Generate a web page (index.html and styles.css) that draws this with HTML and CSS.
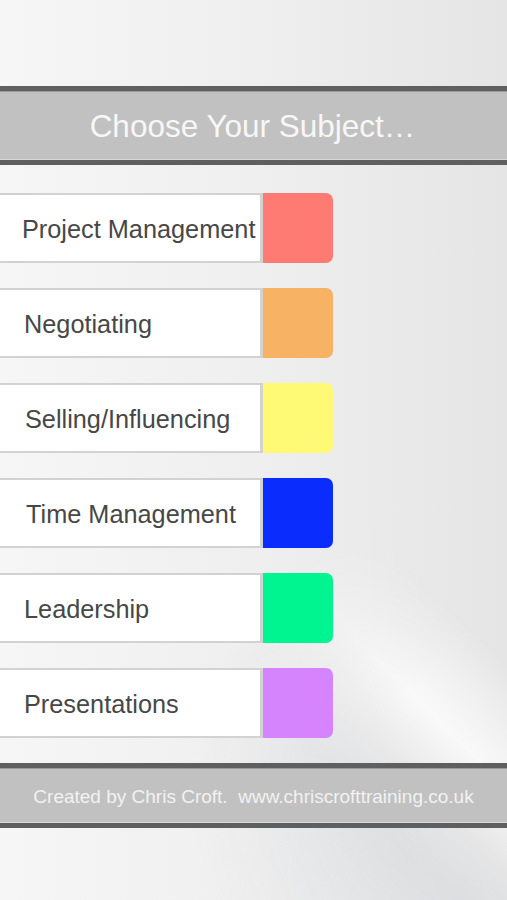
FILE: index.html
```html
<!DOCTYPE html>
<html lang="en">
<head>
<meta charset="utf-8">
<title>Choose Your Subject</title>
<link rel="stylesheet" href="styles.css">
</head>
<body>
<div class="page">
  <header class="bar title-bar">
    <h1 class="title">Choose Your Subject…</h1>
  </header>
  <ul class="subjects">
    <li class="subject">
      <span class="label pad-22">Project Management</span>
      <span class="swatch red"></span>
    </li>
    <li class="subject">
      <span class="label pad-24">Negotiating</span>
      <span class="swatch orange"></span>
    </li>
    <li class="subject">
      <span class="label pad-25">Selling/Influencing</span>
      <span class="swatch yellow"></span>
    </li>
    <li class="subject">
      <span class="label pad-26">Time Management</span>
      <span class="swatch blue"></span>
    </li>
    <li class="subject">
      <span class="label pad-24">Leadership</span>
      <span class="swatch green"></span>
    </li>
    <li class="subject">
      <span class="label pad-24">Presentations</span>
      <span class="swatch purple"></span>
    </li>
  </ul>
  <footer class="bar footer-bar">
    <p class="credit">Created by Chris Croft.  www.chriscrofttraining.co.uk</p>
  </footer>
</div>
</body>
</html>
```

FILE: styles.css
```css
html, body {
  margin: 0;
  padding: 0;
}

body {
  position: relative;
  width: 507px;
  height: 900px;
  overflow: hidden;
  font-family: "Liberation Sans", Arial, sans-serif;
  background: linear-gradient(to right, #f6f6f6 0%, #efefef 50%, #e5e5e5 100%);
}

body::before {
  content: "";
  position: absolute;
  inset: 0;
  background: linear-gradient(45deg,
    rgba(205,210,216,0) 0%,
    rgba(205,210,216,0.4) 33%,
    rgba(228,230,232,0.2) 38%,
    rgba(255,255,255,0.75) 44%,
    rgba(255,255,255,0) 53%);
  -webkit-mask-image: radial-gradient(circle at 490px 790px, #000 0, #000 120px, transparent 300px);
  mask-image: radial-gradient(circle at 490px 790px, #000 0, #000 120px, transparent 300px);
  pointer-events: none;
}

.page {
  position: relative;
  display: flex;
  flex-direction: column;
  padding-top: 86px;
}

.bar {
  background: #c1c1c1;
  border-top: 5px solid #5f5f5f;
  border-bottom: 5px solid #5f5f5f;
  box-shadow: inset 0 -1px 0 #d9d9d9, inset 0 1px 0 #9a9a9a;
  display: flex;
  align-items: center;
  justify-content: center;
}

.title-bar {
  height: 69px;
}

.title {
  margin: 0;
  padding-top: 2px;
  font-weight: normal;
  font-size: 31.5px;
  color: #f7f7f7;
  transform: translateX(-1px);
}

.subjects {
  list-style: none;
  margin: 28px 0 0 0;
  padding: 0;
  display: flex;
  flex-direction: column;
  gap: 25px;
}

.subject {
  display: flex;
  height: 70px;
}

.label {
  box-sizing: border-box;
  width: 267px;
  margin-left: -4px;
  height: 70px;
  padding-top: 3px;
  background: #ffffff;
  border: 2px solid #d2d2d2;
  border-right-width: 3px;
  display: flex;
  align-items: center;
  font-size: 25.3px;
  color: #474747;
  white-space: nowrap;
}

.pad-22 { padding-left: 24px; }
.pad-24 { padding-left: 26px; }
.pad-25 { padding-left: 27px; }
.pad-26 { padding-left: 28px; }

.swatch {
  width: 70px;
  height: 70px;
  border-radius: 0 7px 7px 0;
}

.red { background: #fe7b73; }
.orange { background: #f7b264; }
.yellow { background: #fefa76; }
.blue { background: #0a2cfc; }
.green { background: #00f590; }
.purple { background: #d584fd; }

.footer-bar {
  margin-top: 25px;
  height: 55px;
}

.credit {
  margin: 0;
  padding-top: 2px;
  font-size: 19px;
  color: #f2f2f2;
  white-space: pre;
}
```
